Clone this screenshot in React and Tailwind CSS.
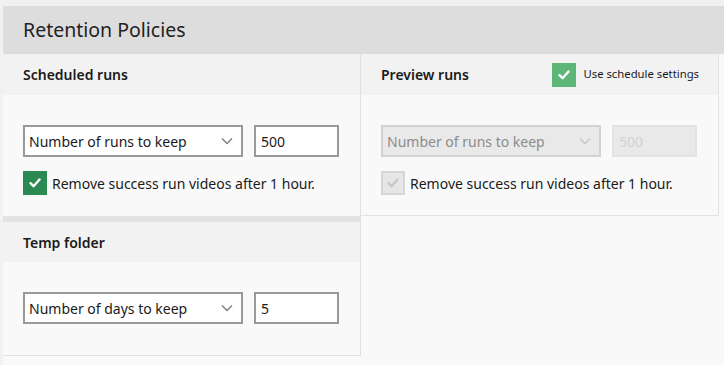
const font = { fontFamily: '"Noto Sans", "Open Sans", sans-serif' }

function Chevron({ disabled }) {
  return (
    <svg width="12" height="8" viewBox="0 0 12 8" className="shrink-0">
      <path d="M1 1.5 L6 6.5 L11 1.5" fill="none" stroke={disabled ? '#c4c4c4' : '#7a7a7a'} strokeWidth="1.3" />
    </svg>
  )
}

function Check({ color = '#ffffff' }) {
  return (
    <svg width="12" height="10" viewBox="0 0 12 10">
      <path d="M1.5 5.2 L4.6 8.2 L10.5 1.5" fill="none" stroke={color} strokeWidth="2.4" strokeLinecap="round" strokeLinejoin="round" />
    </svg>
  )
}

function Select({ label, disabled }) {
  return (
    <div
      className={`w-[220px] h-[32px] border-2 flex items-center justify-between pl-[4px] pr-[8px] text-[14px] ${
        disabled ? 'bg-[#e9e9e9] border-[#d2d2d2] text-[#8c8c8c]' : 'bg-white border-[#999999] text-[#1a1a1a]'
      }`}
    >
      <span>{label}</span>
      <Chevron disabled={disabled} />
    </div>
  )
}

function NumberBox({ value, disabled }) {
  return (
    <div
      className={`w-[85px] h-[32px] border-2 flex items-center pl-[5px] text-[14px] ${
        disabled ? 'bg-[#e9e9e9] border-[#e3e3e3] text-[#d2d2d2]' : 'bg-white border-[#999999] text-[#1a1a1a]'
      }`}
    >
      {value}
    </div>
  )
}

function RemoveVideos({ disabled }) {
  return (
    <div className="flex items-center gap-[5px] mt-[14px]">
      {disabled ? (
        <span className="w-[24px] h-[24px] bg-[#e6e6e6] border-2 border-[#d6d6d6] flex items-center justify-center">
          <Check color="#c9c9c9" />
        </span>
      ) : (
        <span className="w-[24px] h-[24px] bg-[#2a8a52] flex items-center justify-center">
          <Check />
        </span>
      )}
      <span className="text-[14px] text-[#1a1a1a]">Remove success run videos after 1 hour.</span>
    </div>
  )
}

export default function App() {
  return (
    <div className="min-h-screen bg-[#f1f1f1] pt-[6px] pl-[3px] text-[#1a1a1a]" style={font}>
      <div className="bg-[#f9f9f9] min-h-[359px]">
        <div className="h-[48px] bg-[#dddddd] flex items-center pl-[20px] text-[19.5px] text-[#222]">
          Retention Policies
        </div>
        <div className="flex items-start">
          <div className="w-[358px] border-r border-[#e0e0e0] flex flex-col gap-[6px] bg-[#e3e3e3]">
            <div>
              <div className="h-[41px] bg-[#f2f2f2] flex items-center pl-[20px] text-[14px] font-semibold">
                Scheduled runs
              </div>
              <div className="h-[121px] bg-[#f9f9f9] pl-[20px] pt-[30px]">
                <div className="flex gap-[11px]">
                  <Select label="Number of runs to keep" />
                  <NumberBox value="500" />
                </div>
                <RemoveVideos />
              </div>
            </div>
            <div className="border-b border-[#e3e3e3]">
              <div className="h-[40px] bg-[#f2f2f2] flex items-center pl-[20px] text-[14px] font-semibold">
                Temp folder
              </div>
              <div className="h-[93px] bg-[#f9f9f9] pl-[20px] pt-[30px]">
                <div className="flex gap-[11px]">
                  <Select label="Number of days to keep" />
                  <NumberBox value="5" />
                </div>
              </div>
            </div>
          </div>
          <div className="w-[358px] border-r border-b border-[#e3e3e3]">
            <div className="h-[41px] bg-[#f2f2f2] flex items-center justify-between pl-[20px] pr-[19px]">
              <span className="text-[14px] font-semibold">Preview runs</span>
              <div className="flex items-center gap-[7px]">
                <span className="w-[24px] h-[24px] bg-[#5db578] flex items-center justify-center">
                  <Check />
                </span>
                <span className="text-[11.3px]">Use schedule settings</span>
              </div>
            </div>
            <div className="h-[120px] bg-[#f9f9f9] pl-[20px] pt-[30px]">
              <div className="flex gap-[11px]">
                <Select label="Number of runs to keep" disabled />
                <NumberBox value="500" disabled />
              </div>
              <RemoveVideos disabled />
            </div>
          </div>
        </div>
      </div>
    </div>
  )
}
